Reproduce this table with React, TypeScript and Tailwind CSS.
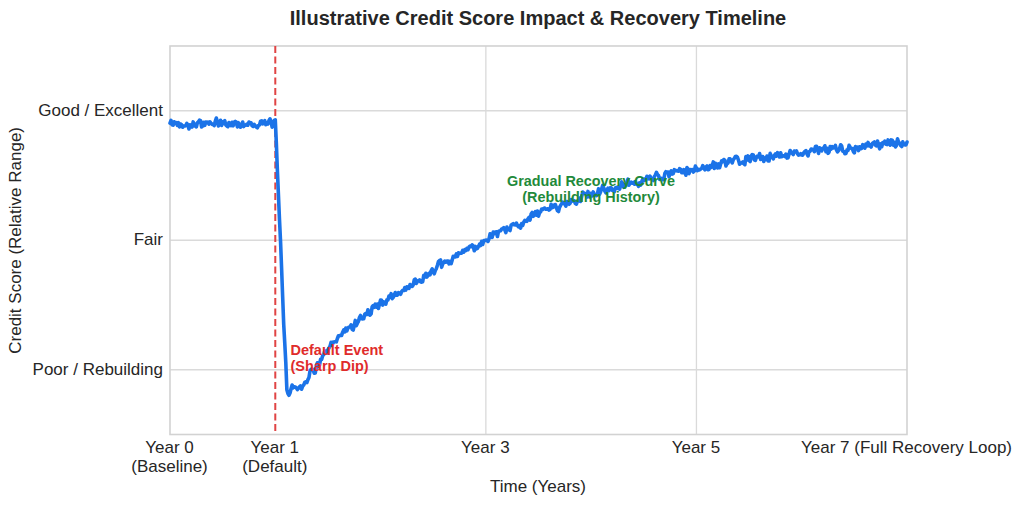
import React from "react";

const PLOT_W = 737;
const PLOT_H = 388.5;
const UNIT = 129.5;

const xs = (t: number) => (t * PLOT_W) / 7;
const ys = (v: number) => (2.5 - v) * UNIT;

// hand-read control points of the score curve (t in years, v in grid units)
const curve: [number, number][] = [
  [0, 1.9],
  [1.0, 1.9],
  [1.11, -0.17],
  [1.18, -0.13],
  [1.24, -0.13],
  [1.334, -0.03],
  [1.619, 0.263],
  [1.904, 0.463],
  [2.189, 0.6],
  [2.474, 0.749],
  [2.778, 0.903],
  [3.253, 1.104],
  [3.566, 1.236],
  [4.041, 1.367],
  [4.677, 1.498],
  [5.0, 1.548],
  [5.466, 1.622],
  [5.94, 1.676],
  [6.415, 1.714],
  [6.96, 1.753],
  [7.0, 1.74],
];

const mulberry32 = (seed: number) => () => {
  seed |= 0;
  seed = (seed + 0x6d2b79f5) | 0;
  let t = Math.imul(seed ^ (seed >>> 15), 1 | seed);
  t = (t + Math.imul(t ^ (t >>> 7), 61 | t)) ^ t;
  return ((t ^ (t >>> 14)) >>> 0) / 4294967296;
};

const valueAt = (t: number) => {
  for (let i = 0; i < curve.length - 1; i++) {
    const [t0, v0] = curve[i];
    const [t1, v1] = curve[i + 1];
    if (t >= t0 && t <= t1) return v0 + ((t - t0) / (t1 - t0)) * (v1 - v0);
  }
  return curve[curve.length - 1][1];
};

const buildPath = () => {
  const rand = mulberry32(42);
  const pts: string[] = [];
  let prev = 0;
  for (let i = 0; i <= 700; i++) {
    const t = i / 100;
    const raw = (rand() - 0.5) * 0.06 + (rand() - 0.5) * 0.03;
    // a little smoothing so the fuzz reads like the sampled noise in the picture
    const noise = prev * 0.35 + raw * 0.9;
    prev = noise;
    const v = valueAt(t) + noise;
    pts.push(`${xs(t).toFixed(2)},${ys(v).toFixed(2)}`);
  }
  return "M" + pts.join(" L");
};

const linePath = buildPath();

const yTicks = ["Good / Excellent", "Fair", "Poor / Rebuilding"];

const xTicks = [
  { t: 0, lines: ["Year 0", "(Baseline)"] },
  { t: 1, lines: ["Year 1", "(Default)"] },
  { t: 3, lines: ["Year 3"] },
  { t: 5, lines: ["Year 5"] },
  { t: 7, lines: ["Year 7 (Full Recovery Loop)"] },
];

const PlotArea = () => (
  <svg width={PLOT_W} height={PLOT_H} viewBox={`0 0 ${PLOT_W} ${PLOT_H}`} className="block overflow-visible">
    {/* grid */}
    {[0, 1, 2].map((v) => (
      <line key={`h${v}`} x1={0} x2={PLOT_W} y1={ys(v)} y2={ys(v)} stroke="#dadada" strokeWidth={1.3} />
    ))}
    {[3, 5].map((t) => (
      <line key={`v${t}`} x1={xs(t)} x2={xs(t)} y1={0} y2={PLOT_H} stroke="#dadada" strokeWidth={1.3} />
    ))}
    <rect x={0} y={0} width={PLOT_W} height={PLOT_H} fill="none" stroke="#d2d2d2" strokeWidth={1.6} />

    {/* default marker */}
    <line x1={xs(1)} x2={xs(1)} y1={0} y2={PLOT_H} stroke="#e04444" strokeWidth={2} strokeDasharray="7 3.5" />

    <path d={linePath} fill="none" stroke="#1b73e8" strokeWidth={3.6} strokeLinejoin="round" strokeLinecap="round" />

    <text fill="#e02b2b" fontFamily="'Liberation Sans', Arial, sans-serif" fontWeight={700} fontSize={14.5}>
      <tspan x={120.5} y={309}>Default Event</tspan>
      <tspan x={120.5} y={324.5}>(Sharp Dip)</tspan>
    </text>
    <text fill="#1f8a3b" fontFamily="'Liberation Sans', Arial, sans-serif" fontWeight={700} fontSize={14.4} textAnchor="middle">
      <tspan x={421} y={140}>Gradual Recovery Curve</tspan>
      <tspan x={421} y={155.5}>(Rebuilding History)</tspan>
    </text>
  </svg>
);

export default function App() {
  return (
    <div
      className="w-[1024px] h-[506px] bg-white text-[#262626] overflow-hidden grid grid-cols-[169.5px_737px_117.5px] grid-rows-[46px_388.5px_42.5px_29px]"
      style={{ fontFamily: "'Liberation Sans', Arial, Helvetica, sans-serif" }}
    >
      <div />
      <div className="flex items-start justify-center pt-[6px]">
        <h1 className="text-[20px] leading-[24px] font-bold whitespace-nowrap">
          Illustrative Credit Score Impact &amp; Recovery Timeline
        </h1>
      </div>
      <div />

      <div className="flex">
        <div className="w-[34px] flex items-center justify-center">
          <span className="[writing-mode:vertical-rl] rotate-180 text-[17px] leading-[20px] whitespace-nowrap">
            Credit Score (Relative Range)
          </span>
        </div>
        <div className="flex-1 flex flex-col justify-around items-end pr-[6.5px]">
          {yTicks.map((label) => (
            <span key={label} className="text-[17px] leading-[20px] whitespace-nowrap">
              {label}
            </span>
          ))}
        </div>
      </div>
      <PlotArea />
      <div />

      <div />
      <div className="relative">
        {xTicks.map((tick) => (
          <div
            key={tick.t}
            className="absolute top-[3.5px] -translate-x-1/2 flex flex-col items-center text-[17px] leading-[19px] whitespace-nowrap"
            style={{ left: `${xs(tick.t)}px` }}
          >
            {tick.lines.map((line) => (
              <span key={line}>{line}</span>
            ))}
          </div>
        ))}
      </div>
      <div />

      <div />
      <div className="flex justify-center">
        <span className="text-[17px] leading-[20px]">Time (Years)</span>
      </div>
      <div />
    </div>
  );
}
